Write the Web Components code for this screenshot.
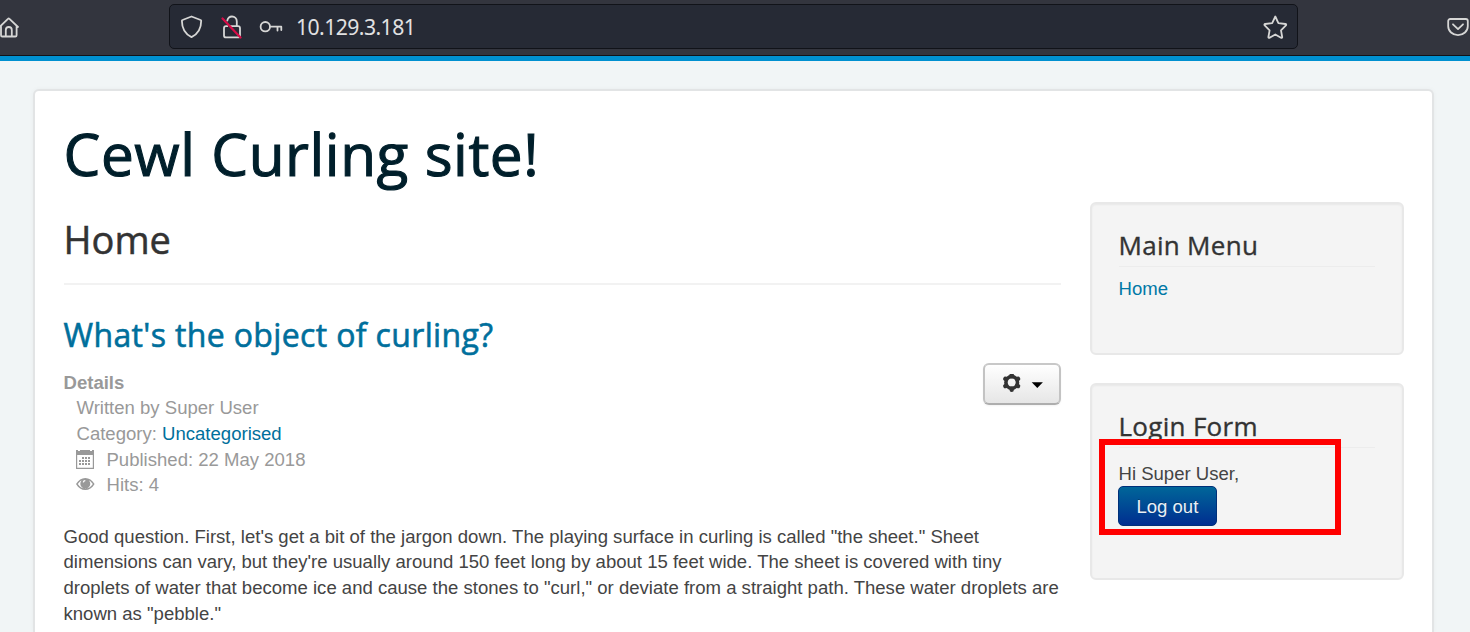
<!DOCTYPE html>
<html lang="en">
<head>
<meta charset="utf-8">
<title>Home</title>
<style>
html,body{margin:0;height:632px;overflow:hidden;background:#f1f5f6}
body{font:18.56px/25.72px "Liberation Sans",Arial,sans-serif;color:#444}
</style>
</head>
<body>
<curling-page></curling-page>
<script>
const define = (name, html) => customElements.define(name, class extends HTMLElement {
  constructor() {
    super();
    this.attachShadow({mode: 'open'}).innerHTML = html;
  }
});

define('browser-bar', `
<style>
:host{display:flex;box-sizing:border-box;height:56px;background:#33353e;border-bottom:1px solid #111319;padding:4px 0 6px;align-items:stretch;overflow:hidden}
svg{display:block;flex:none;fill:none;stroke:#d6d6d5;stroke-width:1.8;stroke-linejoin:round;stroke-linecap:round}
.home{width:20px;margin-right:149px;display:flex;align-items:center}
.url{box-sizing:border-box;width:1129px;display:flex;align-items:center;background:#262a35;border:1px solid #111319;border-radius:5px;padding:0 9px 0 10px;color:#e1e1e2;font:21.2px/30px "Noto Sans",sans-serif;letter-spacing:-.57px}
.shield{margin-right:17px}.lock{margin-right:15px}.key{margin-right:12px}
.url span{flex:1}
.pocket{margin-left:148px;display:flex;align-items:center}
</style>
<div class="home"><svg width="20" height="24" viewBox="0 0 20 24"><path d="M-.5 12 8.2 3.7c.3-.3.7-.3 1 0L18 12M1 11v9.2c0 .9.5 1.3 1.3 1.3h13c.8 0 1.3-.5 1.3-1.3V11M5.800 21v-6a3 3 0 0 1 6 0v6"/></svg></div>
<div class="url">
<svg class="shield" width="24" height="26" viewBox="0 0 24 26"><path d="M11.500 2.500 20.600 6c.4.1.6.4.6.8 0 8-3 13.200-9.700 16.300C4.800 20 1.900 14.800 1.900 6.800c0-.4.2-.7.6-.8z"/></svg>
<svg class="lock" width="22" height="26" viewBox="0 0 22 26"><path d="M6.300 6.500c.6-2.500 2.400-4 4.700-4 2.700 0 4.800 2 4.800 4.900v4.200M6.300 12.200h-1.300c-1.200 0-2 .8-2 2v7.200c0 1.200.8 2 2 2h12c1.200 0 2-.8 2-2v-7.200c0-1.200-.8-2-2-2H9"/><path d="m1.500 4.500 18 19" stroke="#d70c47" stroke-width="2.200"/></svg>
<svg class="key" width="26" height="26" viewBox="0 0 26 26"><circle cx="7.300" cy="12.700" r="4.700"/><path d="M12 12.700h11.300v3.300M19.500 12.700v3.800"/></svg>
<span>10.129.3.181</span>
<svg width="26" height="26" viewBox="0 0 26 26"><path d="m13.300 2.500 3.100 6.600 7 .9c.9.1 1 .8.5 1.300l-4.900 5 1.200 6.700c.1.8-.5 1.200-1.200.8L13.300 20.500l-5.700 3.300c-.7.4-1.300 0-1.200-.8L7.600 16.300l-4.900-5c-.5-.5-.4-1.200.5-1.300l7-.9z"/></svg>
</div>
<div class="pocket"><svg width="24" height="26" viewBox="0 0 24 26"><path d="M4.200 5h15.600c1.200 0 2 .8 2 2v5.200a9.800 8.900 0 0 1-19.600 0V7c0-1.200.8-2 2-2zM7 10.300l5 4.800 5-4.800"/></svg></div>
`);

define('site-heading', `
<style>
:host{display:block;font-family:"Open Sans",sans-serif;color:#333}
:host([kind=site]){font-size:58.500px;line-height:60px;color:#001f2b;letter-spacing:.55px;-webkit-text-stroke:1.1px #001f2b}
:host([kind=page]){font-size:38px;line-height:52px;padding-bottom:18px;border-bottom:2px solid #f2f2f2;-webkit-text-stroke:.5px #333}
:host([kind=article]){font-size:32px;line-height:43px;color:#006f9c;letter-spacing:.36px;-webkit-text-stroke:.6px #006f9c}
:host([kind=module]){font-size:26px;line-height:36px;padding-bottom:3px;border-bottom:1px solid #ececec;letter-spacing:.3px;-webkit-text-stroke:.35px #333}
</style><slot></slot>`);

define('article-info', `
<style>
:host{display:grid;color:#999}
b{font-weight:700}
div{padding-left:13px;display:flex;align-items:center;white-space:pre}
a{color:#006f9c}
svg{width:19px;height:20px;margin:0 12px 0 -1px;fill:#999}
</style>
<b>Details</b>
<div>Written by Super User</div>
<div>Category: <a>Uncategorised</a></div>
<div><svg viewBox="0 0 19 20"><path fill-rule="evenodd" d="M0 0h2v1h2V0h10v1h2V0h2v19H0zM1.200 5v12.800h15.600V5z"/><path d="M6 7h2v2H6zM9 7h2v2H9zM12 7h2v2h-2zM3 10h2v2H3zM6 10h2v2H6zM9 10h2v2H9zM12 10h2v2h-2zM3 13h2v2H3zM6 13h2v2H6zM9 13h2v2H9zM12 13h2v2h-2z"/></svg>Published: 22 May 2018</div>
<div><svg viewBox="0 0 19 20"><path fill-rule="evenodd" d="M0 9C2.500 5 5.500 3 9.300 3s6.800 2 9.300 6c-2.500 4-5.500 6-9.300 6S2.500 13 0 9zM1.800 9c2 3 4.500 4.600 7.500 4.600s5.500-1.600 7.500-4.600c-1.100-1.700-2.300-2.900-3.700-3.600a5 5 0 1 1-7.600 0C4.100 6.100 2.900 7.300 1.800 9z"/><path d="M7.300 7.300a2 2 0 0 1 2-1.600" stroke="#fff" stroke-width="1.300" fill="none"/></svg>Hits: 4</div>
`);

define('gear-button', `
<style>
:host{display:flex;box-sizing:border-box;width:78px;height:42px;border:2px solid #bbb;border-color:#c8c8c8 #c3c3c3 #aeaeae;border-radius:6px;background:linear-gradient(#fff,#e6e6e6);align-items:center;padding-left:17px;box-shadow:0 1px 2px #0000000d}
svg{display:block}
</style>
<svg width="44" height="20" viewBox="0 0 44 20"><g transform="translate(9.700 8.400)" fill="none" stroke="#333"><circle r="5.800" stroke-width="3.600"/><g stroke-width="4.400" stroke-linecap="round"><path d="M0-6.300v-1M0 6.300v1"/><path transform="rotate(60)" d="M0-6.300v-1M0 6.300v1"/><path transform="rotate(120)" d="M0-6.300v-1M0 6.300v1"/></g></g><path d="M29.700 8.200h11.200l-5.600 5.700z" fill="#000"/></svg>`);

define('side-module', `
<style>
:host{display:block;box-sizing:border-box;padding:22.500px 27px 0 26.500px;background:#f4f4f4;border:2px solid #e8e8e8;border-radius:6px;box-shadow:inset 0 1px 2px #0000000d}
</style>
<slot name="title"></slot><slot></slot>`);

define('logout-button', `
<style>
:host{display:block;box-sizing:border-box;width:99px;height:40px;margin-left:-.600px;border:1px solid #003079;border-radius:5px;background:linear-gradient(#006699,#002e90);color:#e9f0f5;text-align:center;line-height:39px;text-shadow:0 -1px 0 #00000040}
</style><slot></slot>`);

define('highlight-frame', `
<style>
:host{position:absolute;left:1099px;top:439px;width:242px;height:96px;box-sizing:border-box;border:6px solid #f00;z-index:2}
</style>`);

define('curling-page', `
<style>
:host{display:block;height:632px;overflow:hidden}
.page{border-top:5px solid #0090d0;padding:28px 36px 0 33px}
.card{box-sizing:border-box;height:543px;border:2px solid #e2e4e5;border-bottom:0;border-radius:6px 6px 0 0;background:#fff;padding:32px 28px 0 28.500px;box-shadow:0 0 5px #0000000a}
.cols{display:grid;grid-template-columns:997.500px 314px;gap:29px;margin-top:19px}
main{margin-top:11px}
site-heading[kind=article]{margin-top:28px}
.meta{display:flex;justify-content:space-between;margin-top:13.600px}
gear-button{margin-top:-6.600px}
p{margin:25.500px 0 0;white-space:nowrap}
aside{display:grid;grid-template-rows:153px 197px;gap:28px}
a{color:#0078a6}
.link{margin-top:9px}
.hi{margin-top:13.500px;line-height:25px}
</style>
<browser-bar></browser-bar>
<div class="page"><div class="card">
<site-heading kind="site">Cewl Curling site!</site-heading>
<div class="cols">
<main>
<site-heading kind="page">Home</site-heading>
<site-heading kind="article">What's the object of curling?</site-heading>
<div class="meta"><article-info></article-info><gear-button></gear-button></div>
<p>Good question. First, let's get a bit of the jargon down. The playing surface in curling is called "the sheet." Sheet<br>dimensions can vary, but they're usually around 150 feet long by about 15 feet wide. The sheet is covered with tiny<br>droplets of water that become ice and cause the stones to "curl," or deviate from a straight path. These water droplets are<br>known as "pebble."</p>
</main>
<aside>
<side-module><site-heading slot="title" kind="module">Main Menu</site-heading><div class="link"><a>Home</a></div></side-module>
<side-module><site-heading slot="title" kind="module">Login Form</site-heading><div class="hi">Hi Super User,</div><logout-button>Log out</logout-button></side-module>
</aside>
</div>
</div></div>
<highlight-frame></highlight-frame>
`);
</script>
</body>
</html>
